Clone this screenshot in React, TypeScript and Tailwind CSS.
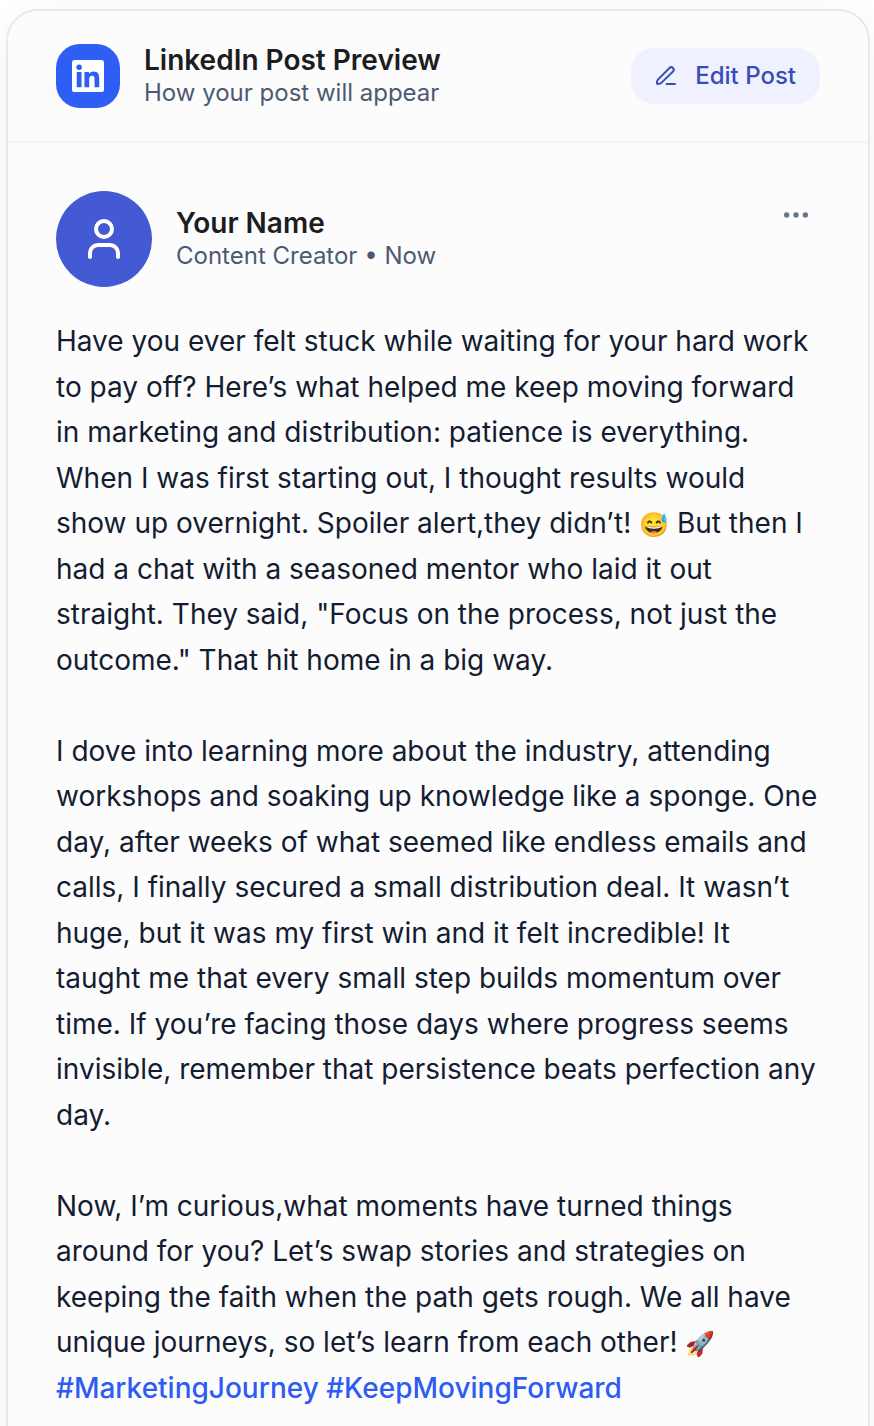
import { Ellipsis } from "lucide-react";

type PostPreviewProps = {
  author: string;
  role: string;
};

function LinkedInLogo() {
  return (
    <svg viewBox="0 0 24 24" className="h-8 w-8" fill="currentColor" aria-hidden="true">
      <path d="M20.447 20.452h-3.554v-5.569c0-1.328-.027-3.037-1.852-3.037-1.853 0-2.136 1.445-2.136 2.939v5.667H9.351V9h3.414v1.561h.046c.477-.9 1.637-1.85 3.37-1.85 3.601 0 4.267 2.37 4.267 5.455v6.286zM5.337 7.433a2.062 2.062 0 0 1-2.063-2.065 2.064 2.064 0 1 1 2.063 2.065zm1.782 13.019H3.555V9h3.564v11.452zM22.225 0H1.771C.792 0 0 .774 0 1.729v20.542C0 23.227.792 24 1.771 24h20.451C23.2 24 24 23.227 24 22.271V1.729C24 .774 23.2 0 22.222 0h.003z" />
    </svg>
  );
}

function PenIcon() {
  return (
    <svg
      viewBox="0 0 24 24"
      className="h-6 w-6"
      fill="none"
      stroke="currentColor"
      strokeWidth="1.9"
      strokeLinecap="round"
      strokeLinejoin="round"
      aria-hidden="true"
    >
      <path d="M11.5 20h8.500" />
      <path d="M2 19.800v-1.900c0-.9.3-1.700 1-2.400L14.500 4a2.450 2.450 0 0 1 3.500 3.500L6.300 18.900c-.6.6-1.400.9-2.300.9z" />
    </svg>
  );
}

function PersonIcon() {
  return (
    <svg
      viewBox="0 0 48 48"
      className="h-12 w-12"
      fill="none"
      stroke="currentColor"
      strokeWidth="4"
      strokeLinecap="round"
      aria-hidden="true"
    >
      <circle cx="24" cy="14" r="8" />
      <path d="M10 42v-4a8 8 0 0 1 8-8h12a8 8 0 0 1 8 8v4" />
    </svg>
  );
}

function PostPreview({ author, role }: PostPreviewProps) {
  return (
    <article className="p-12">
      <div className="flex items-start justify-between">
        <div className="flex items-center gap-6">
          <div className="flex h-24 w-24 items-center justify-center rounded-full bg-[#435ad4] text-white">
            <PersonIcon />
          </div>
          <div>
            <h3 className="text-[28px] leading-[34px] font-semibold text-[#1c1d21]">
              {author}
            </h3>
            <p className="text-2xl text-[#4b5a70]">{role} • Now</p>
          </div>
        </div>

        <button aria-label="More options" className="rounded-full p-2 text-[#65748b]">
          <Ellipsis size={32} />
        </button>
      </div>

      <div className="mt-8 text-[28px] leading-relaxed text-[#141c31]">
        <p>
          Have you ever felt stuck while waiting for your hard work to pay off?
          Here’s what helped me keep moving forward in marketing and
          distribution: patience is everything. When I was first starting out,
          I thought results would show up overnight. Spoiler alert,they didn’t!{" "}
          <span className="text-2xl leading-none">😅</span> But then I had a
          chat with a seasoned mentor who laid it out straight. They said,
          "Focus on the process, not just the outcome." That hit home in a big
          way.
        </p>
        <br />
        <p>
          I dove into learning more about the industry, attending workshops and
          soaking up knowledge like a sponge. One day, after weeks of what
          seemed like endless emails and calls, I finally secured a small
          distribution deal. It wasn’t huge, but it was my first win and it felt
          incredible! It taught me that every small step builds momentum over
          time. If you’re facing those days where progress seems invisible,
          remember that persistence beats perfection any day.
        </p>
        <br />
        <p>
          Now, I’m curious,what moments have turned things around for you? Let’s
          swap stories and strategies on keeping the faith when the path gets
          rough. We all have unique journeys, so let’s learn from each other!{" "}
          <span className="text-2xl leading-none">🚀</span>
        </p>
        <p className="font-medium text-[#2e5cf2]">
          <a href="#MarketingJourney">#MarketingJourney</a>{" "}
          <a href="#KeepMovingForward">#KeepMovingForward</a>
        </p>
      </div>
    </article>
  );
}

export default function App() {
  return (
    <main className="min-h-screen bg-white pt-[9px] pr-1 pl-1.5 font-[Inter,sans-serif]">
      <section className="rounded-4xl border-2 border-[#e8e9ee] bg-[#fcfcfc] shadow-[0_8px_40px_rgba(0,0,0,0.05)]">
        <header className="flex items-center justify-between border-b-2 border-[#f1f5f9] px-12 py-8">
          <div className="flex items-center gap-6">
            <div className="flex h-16 w-16 items-center justify-center rounded-3xl bg-[#2e5ef3] text-white">
              <LinkedInLogo />
            </div>
            <div>
              <h2 className="text-[28px] leading-[34px] font-semibold text-[#1c1d21]">
                LinkedIn Post Preview
              </h2>
              <p className="text-2xl text-[#4b5a70]">How your post will appear</p>
            </div>
          </div>

          <button className="flex h-14 items-center gap-4 rounded-3xl bg-[#eff1fe] px-6 text-2xl font-medium text-[#384cb8]">
            <PenIcon />
            Edit Post
          </button>
        </header>

        <PostPreview author="Your Name" role="Content Creator" />
      </section>
    </main>
  );
}
